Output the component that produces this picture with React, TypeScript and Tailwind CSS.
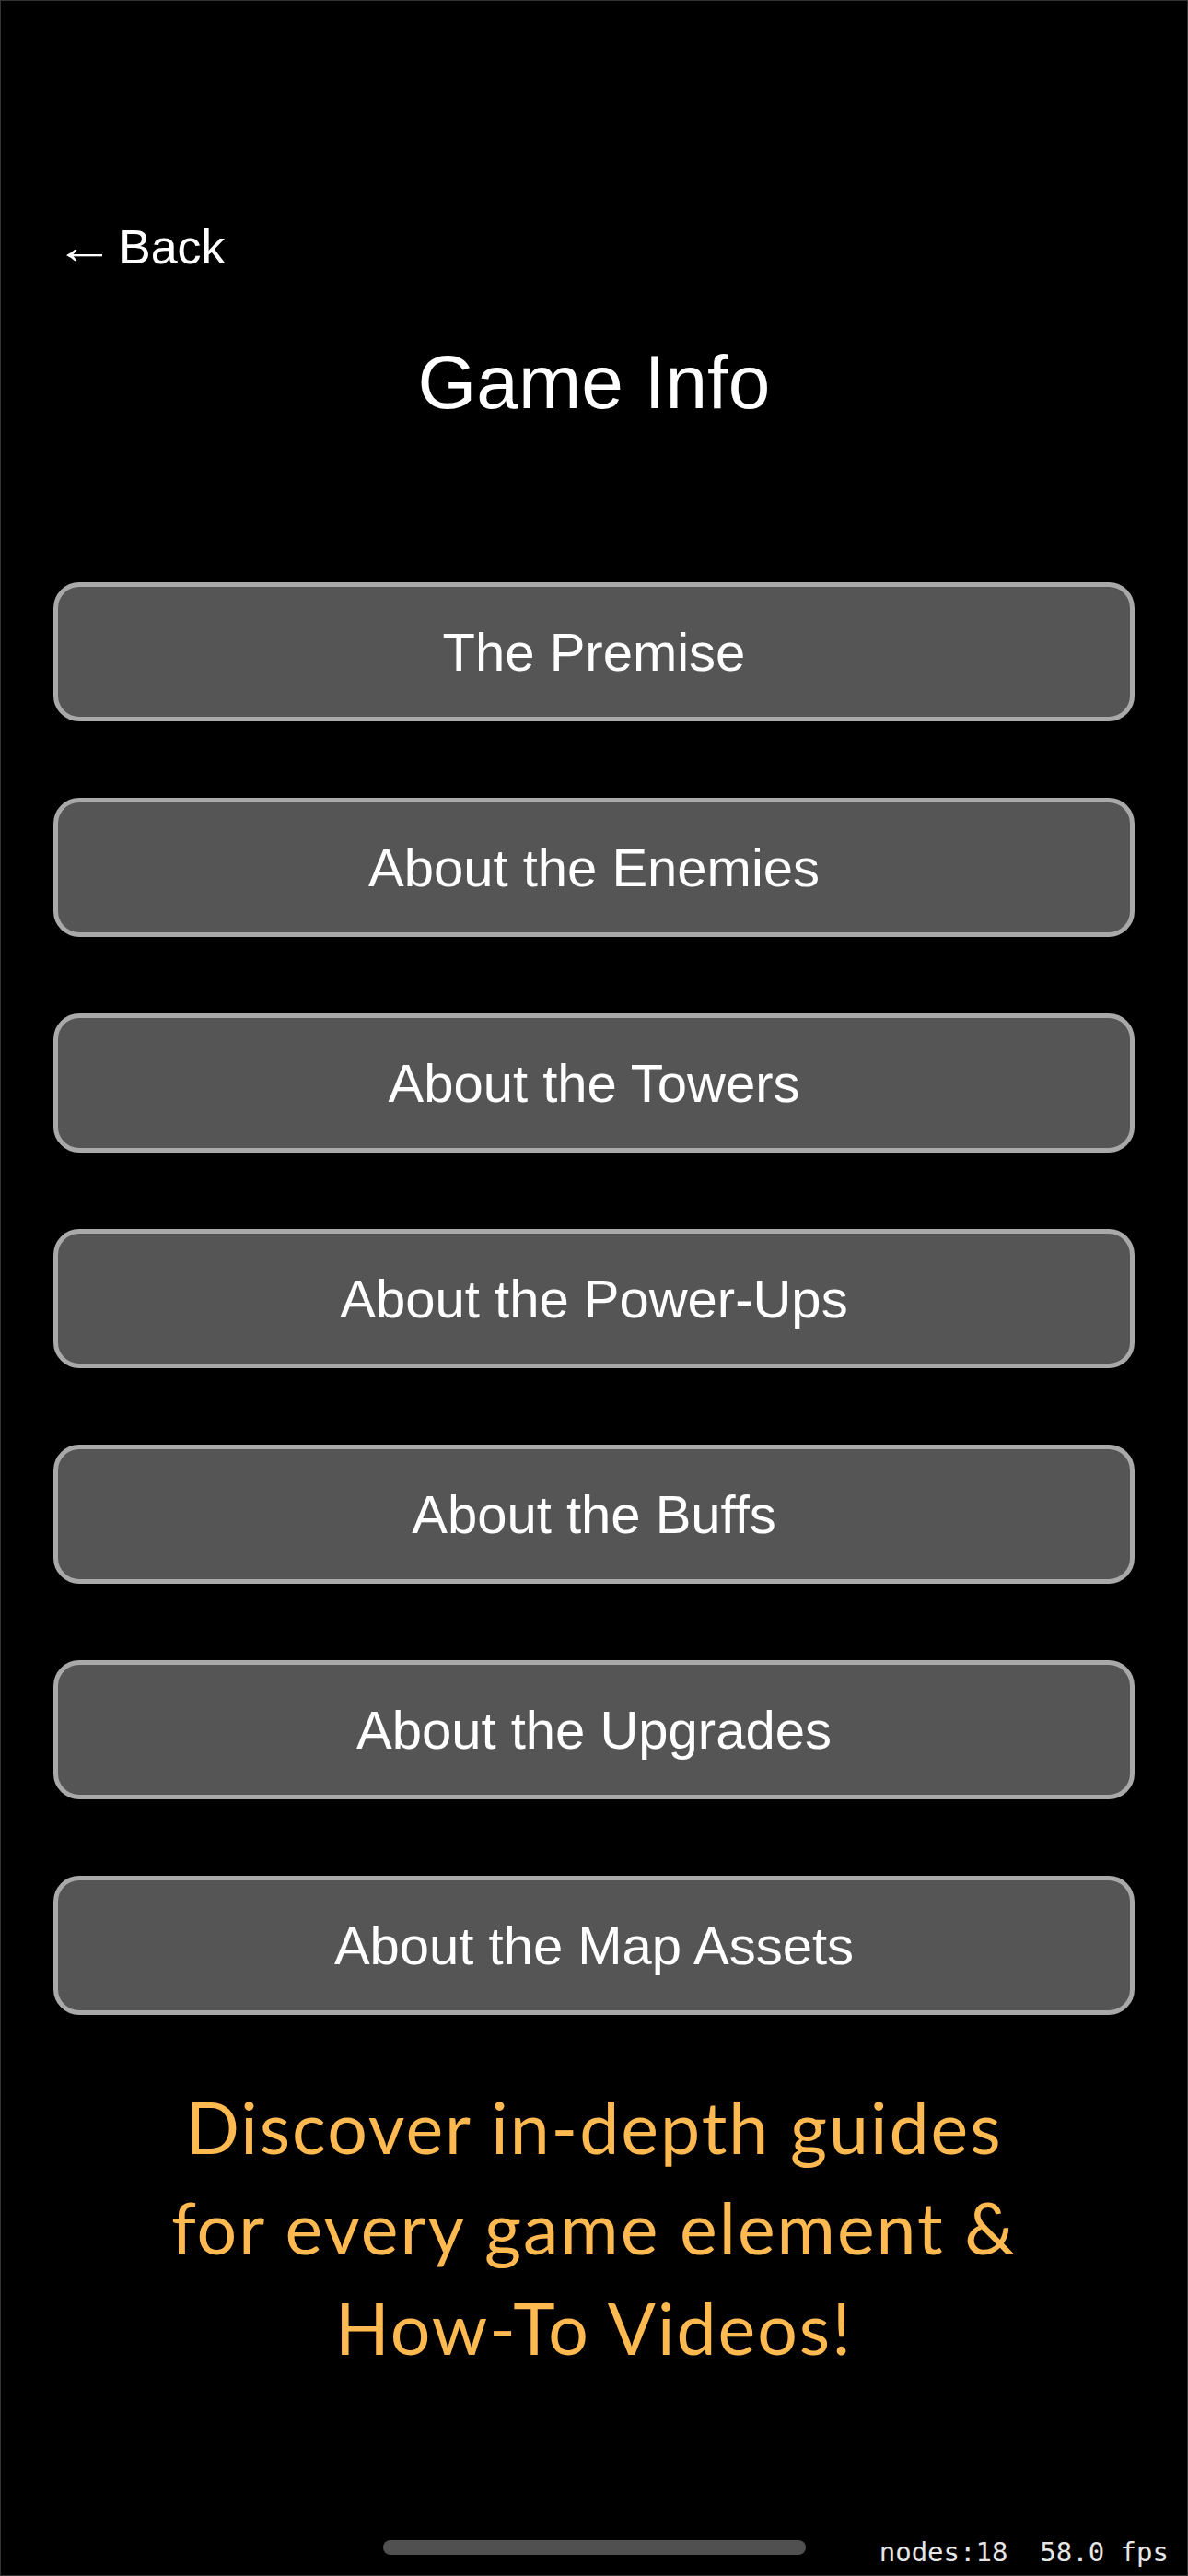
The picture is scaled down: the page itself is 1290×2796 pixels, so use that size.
import React from "react";

const sections = [
  "The Premise",
  "About the Enemies",
  "About the Towers",
  "About the Power-Ups",
  "About the Buffs",
  "About the Upgrades",
  "About the Map Assets",
];

export default function App() {
  return (
    <div className="relative w-[1290px] h-[2796px] overflow-hidden bg-black border border-[#333] font-['Liberation_Sans',Arial,sans-serif] text-white">
      {/* header */}
      <div className="pt-[241px] pl-[58px]">
        <button className="flex items-center gap-[14px] text-[52px] leading-none text-white">
          <span className="inline-block scale-x-125 origin-left">←</span>
          <span className="ml-[4px]">Back</span>
        </button>
      </div>
      <h1 className="mt-[80px] text-center text-[82px] leading-none font-normal">Game Info</h1>

      {/* menu */}
      <div className="mt-[176px] px-[57px] flex flex-col gap-[83px]">
        {sections.map((s) => (
          <MenuButton key={s} label={s} />
        ))}
      </div>

      <p className="mt-[67px] text-center text-[77px] leading-[109px] tracking-[2px] text-[#ffb950] font-['Lato',sans-serif]">
        Discover in-depth guides
        <br />
        for every game element &amp;
        <br />
        How-To Videos!
      </p>

      {/* system overlays */}
      <div className="absolute left-[415px] top-[2756px] w-[459px] h-[16px] rounded-full bg-[#505050]" />
      <div className="absolute right-[20px] top-[2753px] text-[29px] leading-[32px] text-[#e6e6e6] font-['DejaVu_Sans_Mono',monospace] whitespace-pre">
        nodes:18  58.0 fps
      </div>
    </div>
  );
}

const MenuButton = ({ label }: { label: string }) => (
  <button className="h-[151px] w-full rounded-[28px] border-[5px] border-[#a9a9a9] bg-[#555555] flex items-center justify-center text-[58px] leading-none text-white">
    {label}
  </button>
);
